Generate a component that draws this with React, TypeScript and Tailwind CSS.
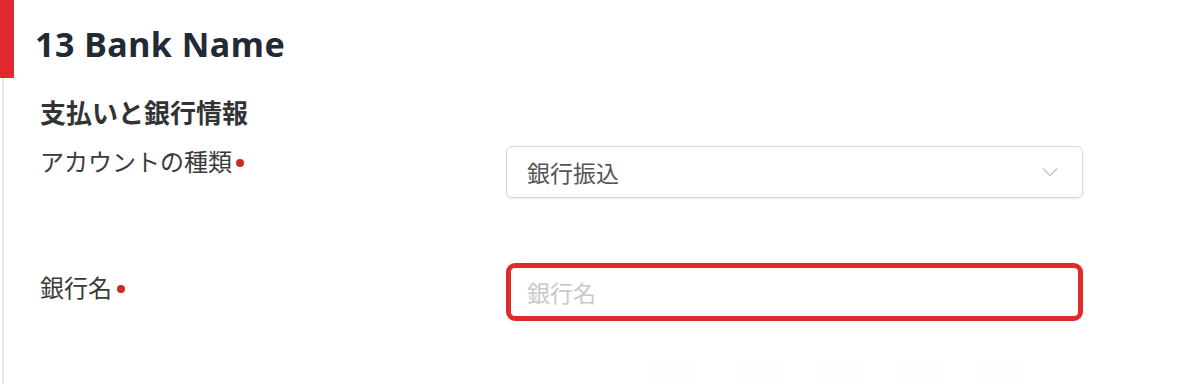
import React from "react";

const jp = { fontFamily: '"Noto Sans CJK JP", "Noto Sans", sans-serif' };

export default function App() {
  return (
    <div className="w-[1200px] h-[384px] bg-white overflow-hidden flex">
      <div className="w-[14px] flex flex-col shrink-0">
        <div className="h-[78px] w-[14px] shrink-0 bg-[#e1292d]" />
        <div className="ml-[2px] w-[2px] flex-1 bg-[#e8e8e8]" />
      </div>
      <div className="flex-1 flex flex-col">
        <div className="h-[78px] shrink-0 flex items-center pl-[21px] pt-[10px]">
          <h1
            className="text-[34px] leading-[40px] font-bold text-[#222a35] tracking-[0.5px]"
            style={{ fontFamily: '"Noto Sans", sans-serif' }}
          >
            13 Bank Name
          </h1>
        </div>
        <div className="pl-[26px] shrink-0" style={jp}>
          <h2 className="mt-[17px] text-[26px] leading-[34px] font-bold text-[#333]">
            支払いと銀行情報
          </h2>
          <div className="mt-[17px] flex">
            <div className="w-[466px] shrink-0 flex items-center h-[30px] text-[24px] leading-[30px] text-[#3a3a3a]">
              アカウントの種類
              <span className="ml-[4px] mt-[4px] w-[8px] h-[8px] rounded-full bg-[#cc2a1f]" />
            </div>
            <div className="w-[577px] h-[52px] border border-[#d6d6d6] rounded-[6px] shadow-[0_1px_2px_rgba(0,0,0,0.08)] flex items-center justify-between pl-[20px] pr-[24px]">
              <span className="text-[23px] text-[#555]">銀行振込</span>
              <svg width="16" height="10" viewBox="0 0 16 10" fill="none">
                <path d="M1 1.5 L8 8.5 L15 1.5" stroke="#c4c4c4" strokeWidth="1.4" />
              </svg>
            </div>
          </div>
          <div className="mt-[65px] flex">
            <div className="w-[466px] shrink-0 pt-[9px]">
              <div className="flex items-center h-[30px] text-[24px] leading-[30px] text-[#3a3a3a]">
                銀行名
                <span className="ml-[5px] mt-[4px] w-[8px] h-[8px] rounded-full bg-[#cc2a1f]" />
              </div>
            </div>
            <div className="w-[577px] h-[58px] border-[5px] border-[#e02b2d] rounded-[9px] flex items-center pl-[16px]">
              <span className="text-[23px] text-[#c9c9c9]">銀行名</span>
            </div>
          </div>
          <div className="mt-[40px] ml-[614px] flex gap-[40px]">
            <div className="w-[42px] h-[30px] bg-[#fdfdfd]" />
            <div className="w-[42px] h-[30px] bg-[#fdfdfd]" />
            <div className="w-[42px] h-[30px] bg-[#fdfdfd]" />
            <div className="w-[42px] h-[30px] bg-[#fdfdfd]" />
            <div className="w-[42px] h-[30px] bg-[#fdfdfd]" />
          </div>
        </div>
      </div>
    </div>
  );
}
